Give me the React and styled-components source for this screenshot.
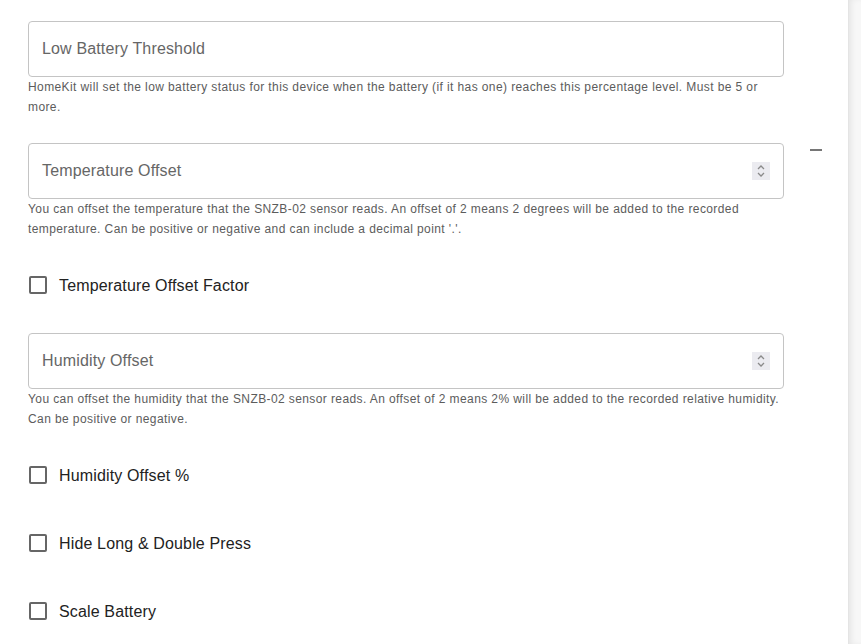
import React from 'react';
import styled, { createGlobalStyle } from 'styled-components';

const GlobalStyle = createGlobalStyle`
  html, body {
    margin: 0;
    padding: 0;
    background: #ffffff;
    font-family: 'Liberation Sans', Arial, sans-serif;
  }
`;

const Page = styled.div`
  display: flex;
  min-height: 644px;
`;

const Panel = styled.div`
  width: 848px;
  flex: none;
  display: flex;
  background: #ffffff;
`;

const Gutter = styled.div`
  flex: 1;
  background: #f7f7f7;
  border-left: 1px solid #e4e4e4;
  box-shadow: inset 4px 0 6px -2px rgba(0, 0, 0, 0.08);
`;

const Form = styled.div`
  width: 756px;
  margin-left: 28px;
  padding-top: 20px;
  display: flex;
  flex-direction: column;
  gap: 25px;
`;

const Side = styled.div`
  padding: 149px 0 0 26px;
`;

const RemoveButton = styled.span`
  display: block;
  width: 12px;
  height: 2px;
  background: #767676;
`;

const Field = styled.div`
  margin-top: 1px;
`;

const InputBox = styled.div`
  box-sizing: border-box;
  height: 56px;
  border: 1px solid #c4c4c4;
  border-radius: 4px;
  padding: 0 13px;
  display: flex;
  align-items: center;
  justify-content: space-between;
`;

const Placeholder = styled.span`
  font-size: 16px;
  letter-spacing: 0.15px;
  color: #666666;
`;

const Spinner = styled.span`
  width: 18px;
  height: 18px;
  background: #ebebf0;
  display: flex;
  align-items: center;
  justify-content: center;
`;

const Help = styled.p`
  margin: 0;
  font-size: 12px;
  line-height: 20px;
  letter-spacing: 0.4px;
  color: #5c5c5c;
`;

const CheckRow = styled.label`
  height: 42px;
  padding-bottom: 1px;
  display: flex;
  align-items: center;
  font-size: 16px;
  letter-spacing: 0.15px;
  color: #222222;
`;

const CheckText = styled.span`
  padding-top: 2px;
`;

const Box = styled.span`
  box-sizing: border-box;
  width: 18px;
  height: 18px;
  margin: 0 12px 0 1px;
  border: 2px solid #666666;
  border-radius: 2px;
`;

const SpinIcon = () => (
  <svg width="10" height="14" viewBox="0 0 10 14" fill="none" stroke="#8a8a8a" strokeWidth="1.3">
    <path d="M2 5 L5 2 L8 5" />
    <path d="M2 9 L5 12 L8 9" />
  </svg>
);

const TextField = ({ label, help, number }) => (
  <Field>
    <InputBox>
      <Placeholder>{label}</Placeholder>
      {number && (
        <Spinner>
          <SpinIcon />
        </Spinner>
      )}
    </InputBox>
    <Help>{help}</Help>
  </Field>
);

const Check = ({ label }) => (
  <CheckRow>
    <Box />
    <CheckText>{label}</CheckText>
  </CheckRow>
);

const App = () => {
  return (
    <Page>
      <GlobalStyle />
      <Panel>
        <Form>
          <TextField
            label="Low Battery Threshold"
            help="HomeKit will set the low battery status for this device when the battery (if it has one) reaches this percentage level. Must be 5 or more."
          />
          <TextField
            number
            label="Temperature Offset"
            help="You can offset the temperature that the SNZB-02 sensor reads. An offset of 2 means 2 degrees will be added to the recorded temperature. Can be positive or negative and can include a decimal point '.'."
          />
          <Check label="Temperature Offset Factor" />
          <TextField
            number
            label="Humidity Offset"
            help="You can offset the humidity that the SNZB-02 sensor reads. An offset of 2 means 2% will be added to the recorded relative humidity. Can be positive or negative."
          />
          <Check label="Humidity Offset %" />
          <Check label="Hide Long & Double Press" />
          <Check label="Scale Battery" />
        </Form>
        <Side>
          <RemoveButton />
        </Side>
      </Panel>
      <Gutter />
    </Page>
  );
};

export default App;
